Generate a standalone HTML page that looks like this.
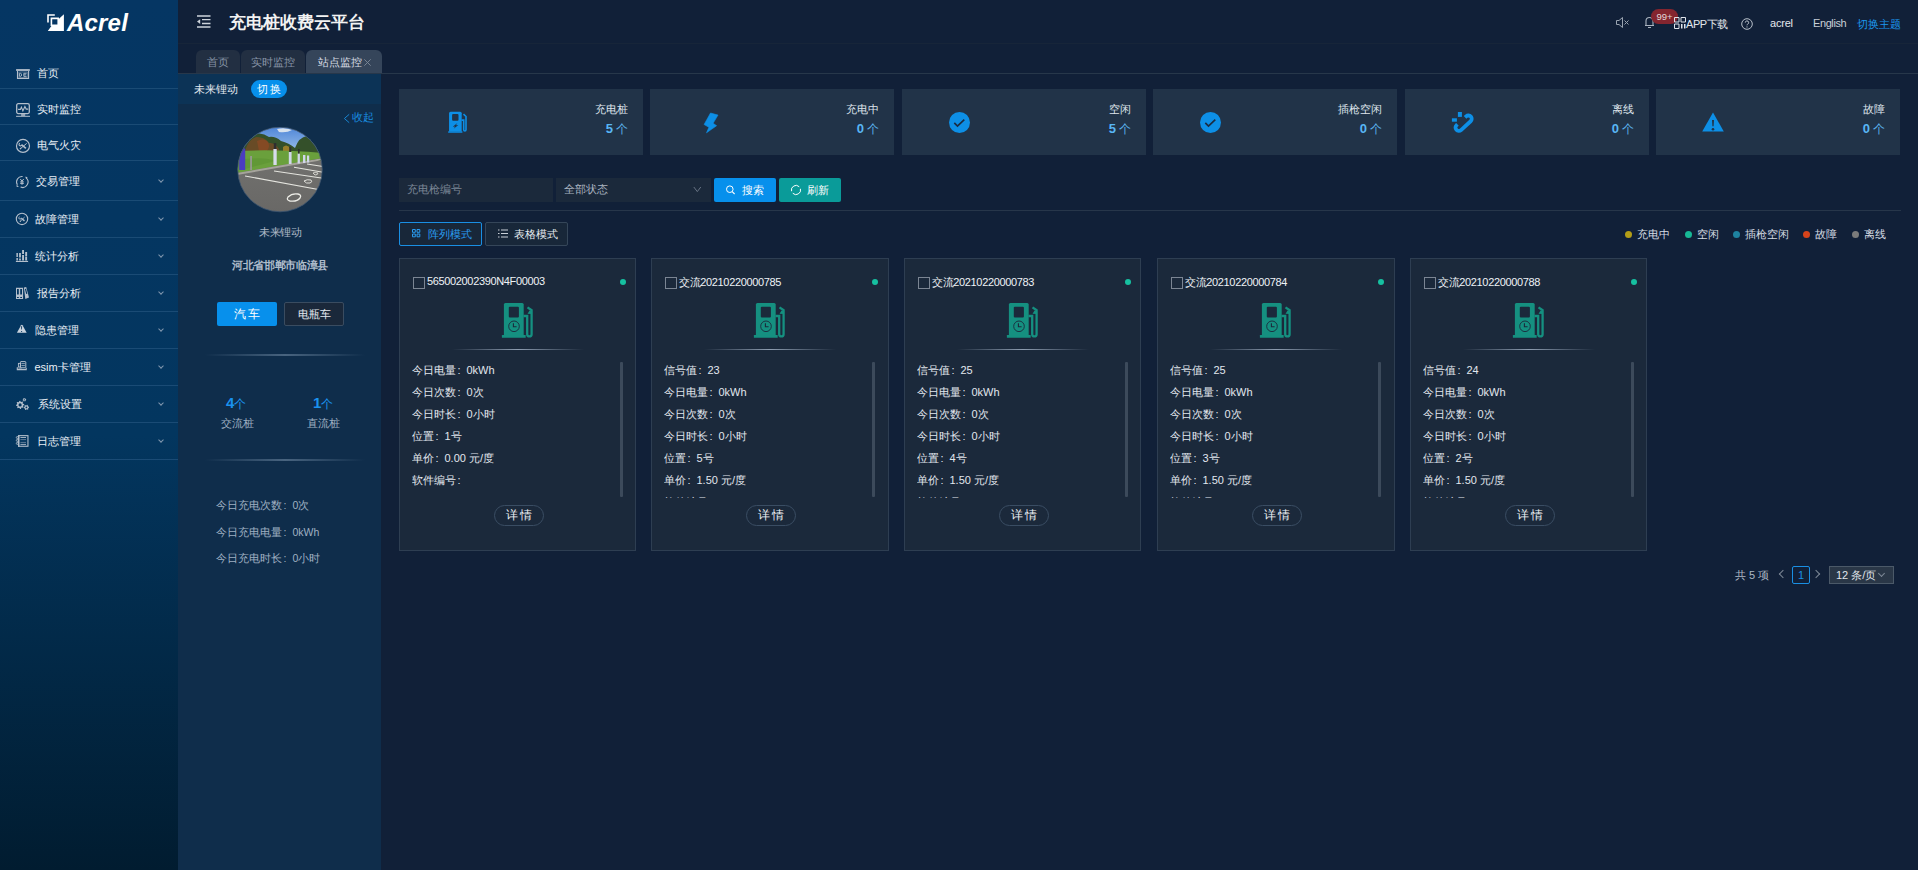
<!DOCTYPE html>
<html><head><meta charset="utf-8">
<style>
*{margin:0;padding:0;box-sizing:border-box;}
html,body{width:1918px;height:870px;overflow:hidden;background:#112038;font-family:"Liberation Sans",sans-serif;color:#d6dde6;}
.abs{position:absolute;white-space:nowrap;}
#side{position:absolute;left:0;top:0;width:178px;height:870px;background:linear-gradient(to bottom,#053663 0%,#03365f 50%,#011c30 100%);}
.logo{position:absolute;left:67px;top:9px;color:#fff;font-weight:bold;font-style:italic;font-size:24px;letter-spacing:0.2px;}
.mi{position:absolute;left:0;width:178px;border-bottom:1px solid #1a4b75;}
.mi svg{position:absolute;}
.mi .tx{position:absolute;left:37px;font-size:11px;color:#e8eef5;white-space:nowrap;line-height:14px;}
.mi .ch{position:absolute;left:159px;width:4px;height:4px;border-right:1px solid #8097ae;border-bottom:1px solid #8097ae;transform:rotate(45deg);margin-top:2.5px;}
#hdr{position:absolute;left:178px;top:0;width:1740px;height:44px;border-bottom:1px solid #172539;}
.tab{position:absolute;top:50px;height:23px;border-radius:6px 6px 0 0;font-size:11px;line-height:25px;text-align:center;color:#8693a5;background:#222f42;}

.sc{position:absolute;top:89px;width:244px;height:66px;background:#213348;}
.sc .t{position:absolute;right:15px;top:13px;font-size:11px;color:#dfe5ec;}
.sc .n{position:absolute;right:15px;top:32px;font-size:13px;font-weight:bold;color:#58b6f5;}
.sc .n span{font-size:12px;font-weight:normal;color:#5ab0ea;margin-left:3px;}
.sc svg{position:absolute;}

.card{position:absolute;top:258px;width:237px;height:293px;background:#1b293b;border:1px solid #2e3e52;}
.card .cb{position:absolute;left:13px;top:18px;width:12px;height:12px;border:1px solid #7b8593;}
.card .ti{position:absolute;left:27px;top:16px;font-size:11px;color:#eef2f6;letter-spacing:-0.35px;}
.card .dot{position:absolute;left:220px;top:20px;width:6px;height:6px;border-radius:3px;background:#16c0a0;}
.card .ico{position:absolute;left:95px;top:36px;}
.card .ln{position:absolute;left:52px;top:90px;width:132px;height:1px;background:linear-gradient(to right,rgba(140,160,180,0),rgba(170,185,205,0.8) 50%,rgba(140,160,180,0));}
.card .rows{position:absolute;left:12px;top:103px;width:200px;height:136px;overflow:hidden;}
.card .rows .in{margin-top:-3px;}
.card .rows .in div{height:22px;line-height:22px;font-size:11px;color:#e2e7ee;white-space:nowrap;}
.card .sb{position:absolute;left:220px;top:103px;width:3px;height:135px;background:#3c4a5b;border-radius:1px;}
.card .dt{position:absolute;left:94px;top:246px;width:50px;height:21px;border:1px solid #3a4d63;border-radius:11px;font-size:12px;line-height:19px;text-align:center;color:#eef2f6;letter-spacing:2px;padding-left:2px;}
.cl{font-style:normal;display:inline-block;width:10.5px;padding-left:1.5px;}
</style></head><body>
<div id="side">
  <svg class="abs" style="left:47px;top:14px" width="18" height="18" viewBox="0 0 18 18"><path d="M16.9 0.3V16.9H0.8L4.4 12H12V4.7z" fill="#fff"/><path d="M3.6 3.6H12V12H3.6z M5.2 5.2V10.4H10.4V5.2z" fill="#fff" fill-rule="evenodd"/><path d="M0.2 0.2H7.8V1.8H1.8V8.5H0.2z" fill="#fff"/></svg>
  <div class="logo">Acrel</div>

  <div class="mi" style="top:52px;height:37px;">
    <svg style="left:12px;top:12px" width="22" height="20" viewBox="0 0 22 20"><rect x="4.1" y="5.1" width="13.7" height="1.8" fill="#b4bfcc"/><path d="M5.5 6.9V14.35H16.6V6.9" stroke="#b4bfcc" stroke-width="1.1" fill="none"/><rect x="6.9" y="8" width="8.3" height="5.3" stroke="#7d90a6" stroke-width="0.6" fill="none"/><path d="M7.6 9.3H8.5Q9.6 9.3 9.6 10.85Q9.6 12.4 8.5 12.4H7.6z" stroke="#b4bfcc" stroke-width="0.9" fill="none"/><path d="M14.6 9.3H11.8V12.4H14.6M11.8 10.85H14.2" stroke="#b4bfcc" stroke-width="0.9" fill="none"/></svg>
    <div class="tx" style="top:14px;left:37px">首页</div>
  </div>
  <div class="mi" style="top:88px;height:37px;">
    <svg style="left:12px;top:11px" width="22" height="22" viewBox="0 0 22 22"><rect x="4.7" y="4.7" width="12.6" height="9.85" rx="1.5" stroke="#b4bfcc" stroke-width="1.3" fill="none"/><path d="M6.1 10.4H8.4L9.4 8.1L10.9 11.9L12.9 7.6L14.2 10.1H16.2" stroke="#b4bfcc" stroke-width="1.1" fill="none"/><rect x="9.1" y="15.2" width="4.1" height="1.6" fill="#b4bfcc"/><rect x="4.05" y="16.8" width="13.95" height="1" fill="#b4bfcc"/></svg>
    <div class="tx" style="top:14px;left:37px">实时监控</div>
  </div>
  <div class="mi" style="top:124px;height:37px;">
    <svg style="left:12px;top:11px" width="22" height="22" viewBox="0 0 22 22"><circle cx="11" cy="10.9" r="6.5" stroke="#b4bfcc" stroke-width="1.2" fill="none"/><path d="M8.6 13.5L14.7 8.4" stroke="#b4bfcc" stroke-width="1"/><circle cx="8.5" cy="13.6" r="0.8" fill="#b4bfcc"/><path d="M7.9 8.2A1.4 1.4 0 1 0 9.8 9.5" stroke="#b4bfcc" stroke-width="1.1" fill="none"/><path d="M9.8 9.8L13.9 13.3" stroke="#b4bfcc" stroke-width="1.6"/></svg>
    <div class="tx" style="top:14px;left:37px">电气火灾</div>
  </div>
  <div class="mi" style="top:160px;height:41px;">
    <svg style="left:12px;top:11px" width="22" height="22" viewBox="0 0 22 22"><path d="M5.4 13.7A5.4 5.4 0 0 1 10.6 5.5" stroke="#b4bfcc" stroke-width="1.1" fill="none"/><path d="M14 6.9A5.4 5.4 0 0 1 8.6 16.1" stroke="#b4bfcc" stroke-width="1.1" fill="none"/><path d="M12.9 5.8L15.4 6L15 8.3z" fill="#b4bfcc"/><path d="M4.5 13.6L6.9 15.8L4.7 16z" fill="#b4bfcc"/><path d="M8.3 8L10 10.2L11.7 8M10 10.2V13.8M8.2 10.9H11.8M8.2 12.4H11.8" stroke="#b4bfcc" stroke-width="1" fill="none"/></svg>
    <div class="tx" style="top:14px;left:35.5px">交易管理</div>
    <div class="ch" style="top:15px"></div>
  </div>
  <div class="mi" style="top:200px;height:38px;">
    <svg style="left:12px;top:8px" width="22" height="22" viewBox="0 0 22 22"><circle cx="10" cy="10.9" r="5.7" stroke="#b4bfcc" stroke-width="1.1" fill="none"/><path d="M8.4 13.2L12.6 9.1" stroke="#b4bfcc" stroke-width="0.9"/><circle cx="8.3" cy="13.3" r="0.7" fill="#b4bfcc"/><path d="M7.5 8.8A1.2 1.2 0 1 0 9.2 9.8" stroke="#b4bfcc" stroke-width="1" fill="none"/><path d="M9.3 10.2L12.5 12.9" stroke="#b4bfcc" stroke-width="1.4"/></svg>
    <div class="tx" style="top:12px;left:35px">故障管理</div>
    <div class="ch" style="top:13px"></div>
  </div>
  <div class="mi" style="top:237px;height:38px;">
    <svg style="left:12px;top:8px" width="22" height="22" viewBox="0 0 22 22"><path d="M4.4 8.1h1.5v3.8h-1.5zM4.4 12.9h1.5v2.5h-1.5zM7.1 8.1h1.8v4.5h-1.8zM7.1 13.6h1.8v1.8h-1.8zM10.1 4.9h1.9v4h-1.9zM10.1 9.9h1.9v5.5h-1.9zM13.2 7h1.9v3.9h-1.9zM13.2 11.6h1.9v3.8h-1.9z" fill="#b4bfcc"/><rect x="3.9" y="15.9" width="12.2" height="1.1" fill="#b4bfcc"/></svg>
    <div class="tx" style="top:12px;left:35px">统计分析</div>
    <div class="ch" style="top:13px"></div>
  </div>
  <div class="mi" style="top:274px;height:38px;">
    <svg style="left:12px;top:8px" width="22" height="22" viewBox="0 0 22 22"><path d="M4 5.8H11.1V17H4z M5 7V12.6H6.8V7z M8.2 7V12.6H10V7z M5 14.9V16H6.8V14.9z M8.2 14.9V16H10V14.9z" fill="#b4bfcc" fill-rule="evenodd"/><path d="M11.9 5.6L14.2 5.1L17 15.6L13.3 17z M12.9 7L14 6.8L15.3 11.7L14.2 12z" fill="#b4bfcc" fill-rule="evenodd"/></svg>
    <div class="tx" style="top:12px;left:37px">报告分析</div>
    <div class="ch" style="top:13px"></div>
  </div>
  <div class="mi" style="top:311px;height:38px;">
    <svg style="left:12px;top:8px" width="22" height="22" viewBox="0 0 22 22"><path d="M9.8 5.8Q10.2 5.8 10.5 6.3L14.7 13.8H4.9L9.1 6.3Q9.4 5.8 9.8 5.8z" fill="#c8d2dd"/><path d="M9.1 7.3H10.1L9.9 10.6H9.3z" fill="#03365f"/><circle cx="9.6" cy="12.5" r="0.6" fill="#03365f"/></svg>
    <div class="tx" style="top:12px;left:34.5px">隐患管理</div>
    <div class="ch" style="top:13px"></div>
  </div>
  <div class="mi" style="top:348px;height:38px;">
    <svg style="left:12px;top:8px" width="22" height="22" viewBox="0 0 22 22"><rect x="8.4" y="5.6" width="5.4" height="6.2" rx="0.6" stroke="#b4bfcc" stroke-width="1" fill="none"/><path d="M9.4 7.6H12.9M9.4 9.6H12.9" stroke="#b4bfcc" stroke-width="0.8"/><rect x="6.4" y="7.4" width="2" height="3.6" stroke="#b4bfcc" stroke-width="0.9" fill="none"/><path d="M5.3 11.2V13.6H14.2V11.8" stroke="#b4bfcc" stroke-width="1.1" fill="none"/><path d="M6.3 12.2H9.5" stroke="#b4bfcc" stroke-width="0.8"/></svg>
    <div class="tx" style="top:12px;left:34.5px">esim卡管理</div>
    <div class="ch" style="top:13px"></div>
  </div>
  <div class="mi" style="top:385px;height:38px;">
    <svg style="left:12px;top:8px" width="22" height="22" viewBox="0 0 22 22"><path d="M12.12 11.10 L12.20 11.90 L11.14 12.50 L10.96 13.09 L11.51 14.18 L11.00 14.80 L9.82 14.48 L9.29 14.76 L8.90 15.92 L8.10 16.00 L7.50 14.94 L6.91 14.76 L5.82 15.31 L5.20 14.80 L5.52 13.62 L5.24 13.09 L4.08 12.70 L4.00 11.90 L5.06 11.30 L5.24 10.71 L4.69 9.62 L5.20 9.00 L6.38 9.32 L6.91 9.04 L7.30 7.88 L8.10 7.80 L8.70 8.86 L9.29 9.04 L10.38 8.49 L11.00 9.00 L10.68 10.18 L10.96 10.71z M9.70 11.90 A1.6 1.6 0 1 0 6.50 11.90 A1.6 1.6 0 1 0 9.70 11.90z" fill="#b4bfcc" fill-rule="evenodd"/><path d="M17.01 13.70 L17.10 14.40 L16.33 14.92 L16.13 15.40 L16.31 16.31 L15.75 16.74 L14.92 16.33 L14.40 16.40 L13.70 17.01 L13.05 16.74 L12.99 15.81 L12.67 15.40 L11.79 15.10 L11.70 14.40 L12.47 13.88 L12.67 13.40 L12.49 12.49 L13.05 12.06 L13.88 12.47 L14.40 12.40 L15.10 11.79 L15.75 12.06 L15.81 12.99 L16.13 13.40z M15.30 14.40 A0.9 0.9 0 1 0 13.50 14.40 A0.9 0.9 0 1 0 15.30 14.40z" fill="#b4bfcc" fill-rule="evenodd"/><path d="M14.14 6.33 L14.20 6.80 L13.70 7.15 L13.57 7.47 L13.67 8.07 L13.30 8.36 L12.75 8.10 L12.40 8.15 L11.93 8.54 L11.50 8.36 L11.45 7.75 L11.23 7.48 L10.66 7.27 L10.60 6.80 L11.10 6.45 L11.23 6.13 L11.13 5.53 L11.50 5.24 L12.05 5.50 L12.40 5.45 L12.87 5.06 L13.30 5.24 L13.35 5.85 L13.57 6.12z M13.00 6.80 A0.6 0.6 0 1 0 11.80 6.80 A0.6 0.6 0 1 0 13.00 6.80z" fill="#b4bfcc" fill-rule="evenodd"/></svg>
    <div class="tx" style="top:12px;left:37.5px">系统设置</div>
    <div class="ch" style="top:13px"></div>
  </div>
  <div class="mi" style="top:422px;height:38px;">
    <svg style="left:12px;top:8px" width="22" height="22" viewBox="0 0 22 22"><rect x="6.65" y="5.65" width="9.3" height="10.6" stroke="#b4bfcc" stroke-width="1.1" fill="none"/><rect x="6.1" y="5.1" width="1.3" height="11.7" fill="#b4bfcc"/><circle cx="5.3" cy="7.5" r="1" stroke="#b4bfcc" stroke-width="0.8" fill="none"/><circle cx="5.3" cy="10.4" r="1" stroke="#b4bfcc" stroke-width="0.8" fill="none"/><circle cx="5.3" cy="13.4" r="1" stroke="#b4bfcc" stroke-width="0.8" fill="none"/><path d="M8.4 7.5H14M8.4 14.4H14" stroke="#b4bfcc" stroke-width="0.9"/><path d="M8.4 9.6H14M8.4 12.4H14" stroke="#8a9bb0" stroke-width="0.7"/></svg>
    <div class="tx" style="top:12px;left:37px">日志管理</div>
    <div class="ch" style="top:13px"></div>
  </div>
</div>

<div id="hdr">
  <svg class="abs" style="left:18.8px;top:15px" width="14" height="13" viewBox="0 0 14 13"><path d="M0 1h13.5M5 4.6h8.5M5 8.5h8.5M0 12h13.5" stroke="#cdd3db" stroke-width="1.4"/><path d="M0 6.5L3.2 4.2v4.8z" fill="#cdd3db"/></svg>
  <div class="abs" style="left:51px;top:12px;font-size:16.6px;font-weight:bold;color:#f2f2f2;">充电桩收费云平台</div>
  <svg class="abs" style="left:1438px;top:17px" width="13" height="11" viewBox="0 0 13 11"><path d="M0.5 3.5h2.5l3.5-3v10l-3.5-3H0.5z" fill="none" stroke="#9aa4b1"/><path d="M8.5 3.5l4 4M12.5 3.5l-4 4" stroke="#9aa4b1"/></svg>
  <svg class="abs" style="left:1466px;top:15px" width="11" height="14" viewBox="0 0 11 14"><path d="M1 10.5h9M2 10.5V6a3.5 3.5 0 0 1 7 0v4.5M4 12.5h3" fill="none" stroke="#aab3bf" stroke-width="1.1"/></svg>
  <div class="abs" style="left:1473px;top:9px;width:27px;height:15px;border-radius:8px;background:#84252f;color:#e2d8da;font-size:9.5px;line-height:15px;text-align:center;">99+</div>
  <svg class="abs" style="left:1496px;top:17px" width="12" height="12" viewBox="0 0 12 12"><path d="M0.5 0.5h4.5v4.5H0.5zM7 0.5h4.5v4.5H7zM0.5 7h4.5v4.5H0.5z" fill="none" stroke="#dfe4ea"/><path d="M7 7h1.5v4.5H7zM10 7h1.5v4.5H10z" fill="#dfe4ea"/></svg>
  <div class="abs" style="left:1508px;top:17px;font-size:11px;color:#e3e7ec;letter-spacing:-0.4px;">APP下载</div>
  <svg class="abs" style="left:1563px;top:18px" width="12" height="12" viewBox="0 0 12 12"><circle cx="6" cy="6" r="5.3" fill="none" stroke="#b9c1cb"/><path d="M4.3 4.6a1.7 1.7 0 1 1 2.3 1.6c-0.5 0.2-0.6 0.5-0.6 1.1" fill="none" stroke="#b9c1cb"/><circle cx="6" cy="8.9" r="0.6" fill="#b9c1cb"/></svg>
  <div class="abs" style="left:1592px;top:17px;font-size:11px;color:#e3e7ec;letter-spacing:-0.2px;">acrel</div>
  <div class="abs" style="left:1635px;top:17px;font-size:11px;color:#c9d0d8;letter-spacing:-0.4px;">English</div>
  <div class="abs" style="left:1679px;top:17px;font-size:11px;color:#1c97ee;">切换主题</div>
</div>
<div class="abs" style="left:178px;top:73px;width:1740px;height:1px;background:#27374a;"></div>
<div class="tab" style="left:196px;width:44px;">首页</div>
<div class="tab" style="left:241px;width:64px;">实时监控</div>
<div class="tab" style="left:306px;width:76px;background:#35455a;color:#d5dbe3;text-align:left;padding-left:12px;">站点监控<svg style="position:absolute;left:58px;top:9px" width="7" height="7" viewBox="0 0 7 7"><path d="M0.3 0.3L6.7 6.7M6.7 0.3L0.3 6.7" stroke="#7f8a98" stroke-width="0.9"/></svg></div>


<!-- left station panel -->
<div class="abs" style="left:178px;top:74px;width:203px;height:796px;background:#0f2d4b;"></div>
<div class="abs" style="left:178px;top:74px;width:203px;height:30px;background:#0c3356;"></div>
<div class="abs" style="left:194px;top:82px;font-size:11px;color:#e4e9ef;">未来锂动</div>
<div class="abs" style="left:251px;top:80px;width:36px;height:18px;border-radius:9px;background:#0790ec;color:#fff;font-size:11px;line-height:18px;text-align:center;letter-spacing:2px;padding-left:2px;">切换</div>
<svg class="abs" style="left:343px;top:113px" width="8" height="11" viewBox="0 0 8 11"><path d="M6.2 1.3L1.4 5.5L6.2 9.7" fill="none" stroke="#1a8ee0" stroke-width="0.9"/></svg><div class="abs" style="left:352px;top:110px;font-size:11px;color:#1a8ee0;">收起</div>
<svg class="abs" style="left:237px;top:127px" width="86" height="86" viewBox="0 0 86 86">
  <defs><clipPath id="cc"><circle cx="43" cy="42.5" r="42.3"/></clipPath>
  <linearGradient id="sky" x1="0" y1="0" x2="0" y2="1"><stop offset="0" stop-color="#4f86d8"/><stop offset="1" stop-color="#9cc0ea"/></linearGradient>
  <linearGradient id="asph" x1="0" y1="0" x2="0" y2="1"><stop offset="0" stop-color="#757572"/><stop offset="1" stop-color="#696866"/></linearGradient></defs>
  <g clip-path="url(#cc)">
    <rect width="86" height="86" fill="url(#asph)"/>
    <rect width="86" height="26" fill="url(#sky)"/>
    <path d="M40 2Q48 0 55 3Q50 6 42 5z" fill="#d8e2ee"/>
    <path d="M0 28Q6 10 16 8Q24 4 32 10Q38 9 44 14Q52 16 58 21Q62 10 70 9Q80 12 86 26V34H0z" fill="#34502a"/>
    <path d="M8 24Q12 11 20 10Q28 10 32 16Q38 15 42 22V26H8z" fill="#7a4a26" opacity="0.75"/>
    <path d="M20 14Q26 11 30 14Q34 18 30 24H22z" fill="#9a4a22" opacity="0.55"/>
    <path d="M46 20Q50 16 54 22V28H46z" fill="#b08a2a" opacity="0.8"/>
    <path d="M0 24Q40 22 86 26V31L0 46z" fill="#6aa03c"/>
    <path d="M8 32Q30 30 38 34L8 42z" fill="#5c9232" opacity="0.6"/>
    <path d="M0 46L86 31V33L0 48z" fill="#a6a49c"/>
    <path d="M8 49L80 62.3M37 44L86 51.3M57 40.2L86 45.2M70 37L86 39.5" stroke="#e4e4de" stroke-width="1.1"/>
    <path d="M51 70Q55 66 61 67Q65 68 63 71Q60 75 53 74Q49 73 51 70z" fill="none" stroke="#ececE6" stroke-width="1.3"/>
    <path d="M67 54Q70 52 74 53Q76 55 73 56Q69 57 67 54z" fill="none" stroke="#e0e0da" stroke-width="1"/>
    <path d="M76 46Q78 45 81 46Q81 48 78 48z" fill="none" stroke="#dcdcd6" stroke-width="0.9"/>
    <rect x="2.2" y="21.5" width="6" height="21.5" fill="#4a3cc0"/>
    <rect x="13.2" y="29" width="1.7" height="14" fill="#9a9a96"/>
    <rect x="36.4" y="22" width="3.3" height="16" fill="#d8dcec"/><rect x="36.8" y="16" width="2.5" height="6" fill="#2e2e30"/>
    <rect x="51.8" y="25" width="2.8" height="12" fill="#d0d6ea"/><rect x="52.2" y="20" width="2" height="5" fill="#2e2e30"/>
    <rect x="60.6" y="26.5" width="2.3" height="10" fill="#d0d6ea"/><rect x="61" y="22" width="1.6" height="4.5" fill="#2e2e30"/>
    <rect x="66" y="28" width="2.4" height="8" fill="#d0d6ea"/>
    <rect x="70" y="28.5" width="2.2" height="7" fill="#d0d6ea"/>
  </g>
  <circle cx="43" cy="42.5" r="42.3" fill="none" stroke="#3d5570" stroke-width="0.8"/>
</svg>
<div class="abs" style="left:259px;top:224.5px;font-size:11px;color:#aeb9c6;letter-spacing:-0.3px;">未来锂动</div>
<div class="abs" style="left:232px;top:257.5px;font-size:11px;color:#aebccb;font-weight:bold;letter-spacing:-0.35px;">河北省邯郸市临漳县</div>
<div class="abs" style="left:217px;top:302px;width:60px;height:24px;border-radius:2px;background:#0790ec;color:#fff;font-size:12px;line-height:24px;text-align:center;letter-spacing:2px;padding-left:2px;">汽车</div>
<div class="abs" style="left:284px;top:302px;width:60px;height:24px;border-radius:2px;background:#1a283a;border:1px solid #3a4c60;color:#e4e9ef;font-size:11px;line-height:22px;text-align:center;">电瓶车</div>
<div class="abs" style="left:205px;top:354px;width:160px;height:2px;background:linear-gradient(to right,rgba(120,145,170,0),rgba(120,145,170,0.55) 50%,rgba(120,145,170,0));"></div>
<div class="abs" style="left:226px;top:394px;font-size:15px;font-weight:bold;color:#1a92ee;">4<span style="font-size:12px;font-weight:normal;">个</span></div>
<div class="abs" style="left:221px;top:416px;font-size:11px;color:#9fb0c2;">交流桩</div>
<div class="abs" style="left:313px;top:394px;font-size:15px;font-weight:bold;color:#1a92ee;">1<span style="font-size:12px;font-weight:normal;">个</span></div>
<div class="abs" style="left:307px;top:416px;font-size:11px;color:#9fb0c2;">直流桩</div>
<div class="abs" style="left:205px;top:459px;width:160px;height:2px;background:linear-gradient(to right,rgba(120,145,170,0),rgba(120,145,170,0.55) 50%,rgba(120,145,170,0));"></div>
<div class="abs" style="left:216px;top:499px;font-size:10.5px;color:#9fb0c2;">今日充电次数<i class="cl">:</i>0次</div>
<div class="abs" style="left:216px;top:526px;font-size:10.5px;color:#9fb0c2;">今日充电电量<i class="cl">:</i>0kWh</div>
<div class="abs" style="left:216px;top:552px;font-size:10.5px;color:#9fb0c2;">今日充电时长<i class="cl">:</i>0小时</div>

<!-- stat cards -->
<div class="sc" style="left:399px;"><svg style="left:41px;top:16px" width="40" height="35" viewBox="0 0 40 35"><path d="M9.05 8.3Q9.05 6.8 10.55 6.8H20.2Q21.7 6.8 21.7 8.3V26.5H9.05z" fill="#0d8fe6"/><path d="M8.3 26.2H22.3Q22.6 27.8 22.3 27.8H8.3Q8 27.8 8.3 26.2z" fill="#0d8fe6"/><rect x="12.1" y="8.9" width="6.4" height="6.8" rx="1" fill="#213348"/><path d="M17.4 18.1L12.7 21.8L15.1 21.4L13.7 23.8L18.3 19.9L15.9 20.3z" fill="#213348"/><path d="M21.5 15.1H23.7V24.8A1.15 1.15 0 0 0 26 24.8V11.5L23.5 9.2" fill="none" stroke="#0d8fe6" stroke-width="1.6"/></svg><div class="t">充电桩</div><div class="n">5<span>个</span></div></div>
<div class="sc" style="left:650px;"><svg style="left:40px;top:16px" width="40" height="35" viewBox="0 0 40 35"><path d="M20.5 8L28 10.1L23.1 18.3L26.6 20.7L16.5 27.8L18.9 22.3L14.1 19.5z" fill="#0d8fe6" stroke="#0d8fe6" stroke-width="0.6" stroke-linejoin="round"/></svg><div class="t">充电中</div><div class="n">0<span>个</span></div></div>
<div class="sc" style="left:902px;"><svg style="left:47px;top:23px" width="21" height="21" viewBox="0 0 21 21"><circle cx="10.5" cy="10.5" r="10.5" fill="#0d8fe6"/><path d="M5.3 10.8L8.5 14L15.3 7.6" fill="none" stroke="#1b2c42" stroke-width="1.7"/></svg><div class="t">空闲</div><div class="n">5<span>个</span></div></div>
<div class="sc" style="left:1153px;"><svg style="left:47px;top:23px" width="21" height="21" viewBox="0 0 21 21"><circle cx="10.5" cy="10.5" r="10.5" fill="#0d8fe6"/><path d="M5.3 10.8L8.5 14L15.3 7.6" fill="none" stroke="#1b2c42" stroke-width="1.7"/></svg><div class="t">插枪空闲</div><div class="n">0<span>个</span></div></div>
<div class="sc" style="left:1405px;"><svg style="left:46px;top:23px" width="24" height="24" viewBox="0 0 24 24"><rect x="6.9" y="0" width="4" height="4.9" fill="#0d8fe6"/><rect x="0.9" y="6.3" width="5" height="3.4" fill="#0d8fe6"/><path d="M14.06 5.38L15.17 4.36A3.3 3.3 0 0 1 19.63 9.24L10.03 18.04A3.3 3.3 0 0 1 5.57 13.16L6.46 12.35" fill="none" stroke="#0d8fe6" stroke-width="3.8"/></svg><div class="t">离线</div><div class="n">0<span>个</span></div></div>
<div class="sc" style="left:1656px;"><svg style="left:46px;top:23px" width="22" height="20" viewBox="0 0 22 20"><path d="M11 0.5L21.8 19.5H0.2z" fill="#0d8fe6"/><path d="M10 7.9H12L11.6 14.3H10.4z" fill="#213348"/><circle cx="11" cy="17.2" r="1.3" fill="#213348"/></svg><div class="t">故障</div><div class="n">0<span>个</span></div></div>

<!-- filter bar -->
<div class="abs" style="left:399px;top:178px;width:154px;height:24px;background:#1b293b;color:#7c8796;font-size:11px;line-height:23px;padding-left:8px;">充电枪编号</div>
<div class="abs" style="left:556px;top:178px;width:155px;height:24px;background:#1b293b;color:#aab4c0;font-size:11px;line-height:23px;padding-left:8px;">全部状态</div>
<svg class="abs" style="left:693px;top:186px" width="9" height="7" viewBox="0 0 9 7"><path d="M0.8 1L4.3 5.6L7.8 1" fill="none" stroke="#6f7b8b" stroke-width="0.9"/></svg>
<div class="abs" style="left:714px;top:178px;width:62px;height:24px;background:#0790ec;border-radius:2px;color:#fff;font-size:11px;line-height:24px;padding-left:28px;">搜索</div>
<svg class="abs" style="left:725px;top:184px" width="11" height="11" viewBox="0 0 11 11"><circle cx="4.8" cy="5.2" r="3.3" fill="none" stroke="#fff" stroke-width="1"/><path d="M7.2 7.6L9.6 10" stroke="#fff" stroke-width="1.1"/></svg>
<div class="abs" style="left:779px;top:178px;width:62px;height:24px;background:#0a9b99;border-radius:2px;color:#fff;font-size:11px;line-height:24px;padding-left:28px;">刷新</div>
<svg class="abs" style="left:790px;top:184px" width="12" height="12" viewBox="0 0 12 12"><path d="M1.56 7.19A4.6 4.6 0 0 1 9.25 2.75M10.44 4.81A4.6 4.6 0 0 1 2.75 9.25" fill="none" stroke="#fff" stroke-width="1"/></svg>
<div class="abs" style="left:399px;top:210px;width:1502px;height:1px;background:#27364a;"></div>

<div class="abs" style="left:399px;top:222px;width:83px;height:24px;border:1px solid #1a8fe3;border-radius:2px;background:#182739;color:#2a9cf0;font-size:11px;line-height:22px;padding-left:28px;">阵列模式</div>
<svg class="abs" style="left:412px;top:229px" width="9" height="9" viewBox="0 0 9 9"><path d="M0.5 0.5h2.8v2.8h-2.8zM5 0.5h2.8v2.8h-2.8zM0.5 5h2.8v2.8h-2.8zM5 5h2.8v2.8h-2.8z" fill="none" stroke="#2a9cf0" stroke-width="1"/></svg>
<div class="abs" style="left:485px;top:222px;width:83px;height:24px;border:1px solid #354659;border-radius:2px;background:#182739;color:#e6ebf0;font-size:11px;line-height:22px;padding-left:28px;">表格模式</div>
<svg class="abs" style="left:498px;top:229px" width="10" height="9" viewBox="0 0 10 9"><path d="M0 1h1.5M0 4.5h1.5M0 8h1.5M3 1h7M3 4.5h7M3 8h7" stroke="#c9d0d8" stroke-width="1.1"/></svg>

<!-- legend -->
<div class="abs" style="left:1625px;top:230.5px;width:7px;height:7px;border-radius:3.5px;background:#b39d17;"></div>
<div class="abs" style="left:1637px;top:227px;font-size:11px;color:#d6dce4;">充电中</div>
<div class="abs" style="left:1685px;top:230.5px;width:7px;height:7px;border-radius:3.5px;background:#17b896;"></div>
<div class="abs" style="left:1697px;top:227px;font-size:11px;color:#d6dce4;">空闲</div>
<div class="abs" style="left:1733px;top:230.5px;width:7px;height:7px;border-radius:3.5px;background:#1e82a0;"></div>
<div class="abs" style="left:1745px;top:227px;font-size:11px;color:#d6dce4;">插枪空闲</div>
<div class="abs" style="left:1803px;top:230.5px;width:7px;height:7px;border-radius:3.5px;background:#d6431b;"></div>
<div class="abs" style="left:1815px;top:227px;font-size:11px;color:#d6dce4;">故障</div>
<div class="abs" style="left:1852px;top:230.5px;width:7px;height:7px;border-radius:3.5px;background:#7b7b7b;"></div>
<div class="abs" style="left:1864px;top:227px;font-size:11px;color:#d6dce4;">离线</div>

<!-- device cards -->
<div class="card" style="left:399px;"><div class="cb"></div><div class="ti">565002002390N4F00003</div><div class="dot"></div><svg class="ico" width="50" height="50" viewBox="0 0 50 50"><path d="M8.9 9.5Q8.9 8 10.4 8H27.2Q28.7 8 28.7 9.5V40.5H8.9z" fill="#159080"/><path d="M7.4 40H30.2Q30.7 40 30.7 40.5V42.8H6.9V40.5Q6.9 40 7.4 40z" fill="#159080"/><rect x="13.8" y="11.8" width="10.1" height="10.6" rx="1" fill="#1b293b"/><circle cx="19" cy="31.3" r="5.3" fill="none" stroke="#1b293b" stroke-width="0.9"/><path d="M18.4 28.2V31.7H21.6" fill="none" stroke="#1b293b" stroke-width="1.1"/><path d="M28.5 21H32.2V39.2A2.2 2.2 0 0 0 36.6 39.2V15.2L32.5 12.4" fill="none" stroke="#159080" stroke-width="2.3"/><path d="M32.5 18.8L34.6 15.6L36.6 16.5V19z" fill="#159080"/></svg><div class="ln"></div><div class="rows"><div class="in"><div>今日电量<i class="cl">:</i>0kWh</div><div>今日次数<i class="cl">:</i>0次</div><div>今日时长<i class="cl">:</i>0小时</div><div>位置<i class="cl">:</i>1号</div><div>单价<i class="cl">:</i>0.00 元/度</div><div>软件编号<i class="cl">:</i></div><div></div></div></div><div class="sb"></div><div class="dt">详情</div></div>
<div class="card" style="left:651px;width:238px;"><div class="cb"></div><div class="ti">交流20210220000785</div><div class="dot"></div><svg class="ico" width="50" height="50" viewBox="0 0 50 50"><path d="M8.9 9.5Q8.9 8 10.4 8H27.2Q28.7 8 28.7 9.5V40.5H8.9z" fill="#159080"/><path d="M7.4 40H30.2Q30.7 40 30.7 40.5V42.8H6.9V40.5Q6.9 40 7.4 40z" fill="#159080"/><rect x="13.8" y="11.8" width="10.1" height="10.6" rx="1" fill="#1b293b"/><circle cx="19" cy="31.3" r="5.3" fill="none" stroke="#1b293b" stroke-width="0.9"/><path d="M18.4 28.2V31.7H21.6" fill="none" stroke="#1b293b" stroke-width="1.1"/><path d="M28.5 21H32.2V39.2A2.2 2.2 0 0 0 36.6 39.2V15.2L32.5 12.4" fill="none" stroke="#159080" stroke-width="2.3"/><path d="M32.5 18.8L34.6 15.6L36.6 16.5V19z" fill="#159080"/></svg><div class="ln"></div><div class="rows"><div class="in"><div>信号值<i class="cl">:</i>23</div><div>今日电量<i class="cl">:</i>0kWh</div><div>今日次数<i class="cl">:</i>0次</div><div>今日时长<i class="cl">:</i>0小时</div><div>位置<i class="cl">:</i>5号</div><div>单价<i class="cl">:</i>1.50 元/度</div><div>软件编号<i class="cl">:</i></div></div></div><div class="sb"></div><div class="dt">详情</div></div>
<div class="card" style="left:904px;"><div class="cb"></div><div class="ti">交流20210220000783</div><div class="dot"></div><svg class="ico" width="50" height="50" viewBox="0 0 50 50"><path d="M8.9 9.5Q8.9 8 10.4 8H27.2Q28.7 8 28.7 9.5V40.5H8.9z" fill="#159080"/><path d="M7.4 40H30.2Q30.7 40 30.7 40.5V42.8H6.9V40.5Q6.9 40 7.4 40z" fill="#159080"/><rect x="13.8" y="11.8" width="10.1" height="10.6" rx="1" fill="#1b293b"/><circle cx="19" cy="31.3" r="5.3" fill="none" stroke="#1b293b" stroke-width="0.9"/><path d="M18.4 28.2V31.7H21.6" fill="none" stroke="#1b293b" stroke-width="1.1"/><path d="M28.5 21H32.2V39.2A2.2 2.2 0 0 0 36.6 39.2V15.2L32.5 12.4" fill="none" stroke="#159080" stroke-width="2.3"/><path d="M32.5 18.8L34.6 15.6L36.6 16.5V19z" fill="#159080"/></svg><div class="ln"></div><div class="rows"><div class="in"><div>信号值<i class="cl">:</i>25</div><div>今日电量<i class="cl">:</i>0kWh</div><div>今日次数<i class="cl">:</i>0次</div><div>今日时长<i class="cl">:</i>0小时</div><div>位置<i class="cl">:</i>4号</div><div>单价<i class="cl">:</i>1.50 元/度</div><div>软件编号<i class="cl">:</i></div></div></div><div class="sb"></div><div class="dt">详情</div></div>
<div class="card" style="left:1157px;width:238px;"><div class="cb"></div><div class="ti">交流20210220000784</div><div class="dot"></div><svg class="ico" width="50" height="50" viewBox="0 0 50 50"><path d="M8.9 9.5Q8.9 8 10.4 8H27.2Q28.7 8 28.7 9.5V40.5H8.9z" fill="#159080"/><path d="M7.4 40H30.2Q30.7 40 30.7 40.5V42.8H6.9V40.5Q6.9 40 7.4 40z" fill="#159080"/><rect x="13.8" y="11.8" width="10.1" height="10.6" rx="1" fill="#1b293b"/><circle cx="19" cy="31.3" r="5.3" fill="none" stroke="#1b293b" stroke-width="0.9"/><path d="M18.4 28.2V31.7H21.6" fill="none" stroke="#1b293b" stroke-width="1.1"/><path d="M28.5 21H32.2V39.2A2.2 2.2 0 0 0 36.6 39.2V15.2L32.5 12.4" fill="none" stroke="#159080" stroke-width="2.3"/><path d="M32.5 18.8L34.6 15.6L36.6 16.5V19z" fill="#159080"/></svg><div class="ln"></div><div class="rows"><div class="in"><div>信号值<i class="cl">:</i>25</div><div>今日电量<i class="cl">:</i>0kWh</div><div>今日次数<i class="cl">:</i>0次</div><div>今日时长<i class="cl">:</i>0小时</div><div>位置<i class="cl">:</i>3号</div><div>单价<i class="cl">:</i>1.50 元/度</div><div>软件编号<i class="cl">:</i></div></div></div><div class="sb"></div><div class="dt">详情</div></div>
<div class="card" style="left:1410px;"><div class="cb"></div><div class="ti">交流20210220000788</div><div class="dot"></div><svg class="ico" width="50" height="50" viewBox="0 0 50 50"><path d="M8.9 9.5Q8.9 8 10.4 8H27.2Q28.7 8 28.7 9.5V40.5H8.9z" fill="#159080"/><path d="M7.4 40H30.2Q30.7 40 30.7 40.5V42.8H6.9V40.5Q6.9 40 7.4 40z" fill="#159080"/><rect x="13.8" y="11.8" width="10.1" height="10.6" rx="1" fill="#1b293b"/><circle cx="19" cy="31.3" r="5.3" fill="none" stroke="#1b293b" stroke-width="0.9"/><path d="M18.4 28.2V31.7H21.6" fill="none" stroke="#1b293b" stroke-width="1.1"/><path d="M28.5 21H32.2V39.2A2.2 2.2 0 0 0 36.6 39.2V15.2L32.5 12.4" fill="none" stroke="#159080" stroke-width="2.3"/><path d="M32.5 18.8L34.6 15.6L36.6 16.5V19z" fill="#159080"/></svg><div class="ln"></div><div class="rows"><div class="in"><div>信号值<i class="cl">:</i>24</div><div>今日电量<i class="cl">:</i>0kWh</div><div>今日次数<i class="cl">:</i>0次</div><div>今日时长<i class="cl">:</i>0小时</div><div>位置<i class="cl">:</i>2号</div><div>单价<i class="cl">:</i>1.50 元/度</div><div>软件编号<i class="cl">:</i></div></div></div><div class="sb"></div><div class="dt">详情</div></div>

<!-- pagination -->
<div class="abs" style="left:1735px;top:568px;font-size:11px;color:#aeb8c4;">共 5 项</div>
<div class="abs" style="left:1780px;top:571px;width:6px;height:6px;border-left:1px solid #7d8896;border-bottom:1px solid #7d8896;transform:rotate(45deg);"></div>
<div class="abs" style="left:1792px;top:566px;width:18px;height:18px;border:1px solid #1a8fe3;border-radius:2px;color:#1a8fe3;font-size:11px;line-height:16px;text-align:center;">1</div>
<div class="abs" style="left:1813px;top:571px;width:6px;height:6px;border-right:1px solid #7d8896;border-top:1px solid #7d8896;transform:rotate(45deg);"></div>
<div class="abs" style="left:1829px;top:566px;width:65px;height:18px;border:1px solid #4b5968;background:#2a3747;color:#e0e5eb;font-size:11px;line-height:16px;padding-left:6px;">12 条/页</div>
<div class="abs" style="left:1879px;top:571px;width:5px;height:5px;border-right:1px solid #7d8896;border-bottom:1px solid #7d8896;transform:rotate(45deg);"></div>
</body></html>
